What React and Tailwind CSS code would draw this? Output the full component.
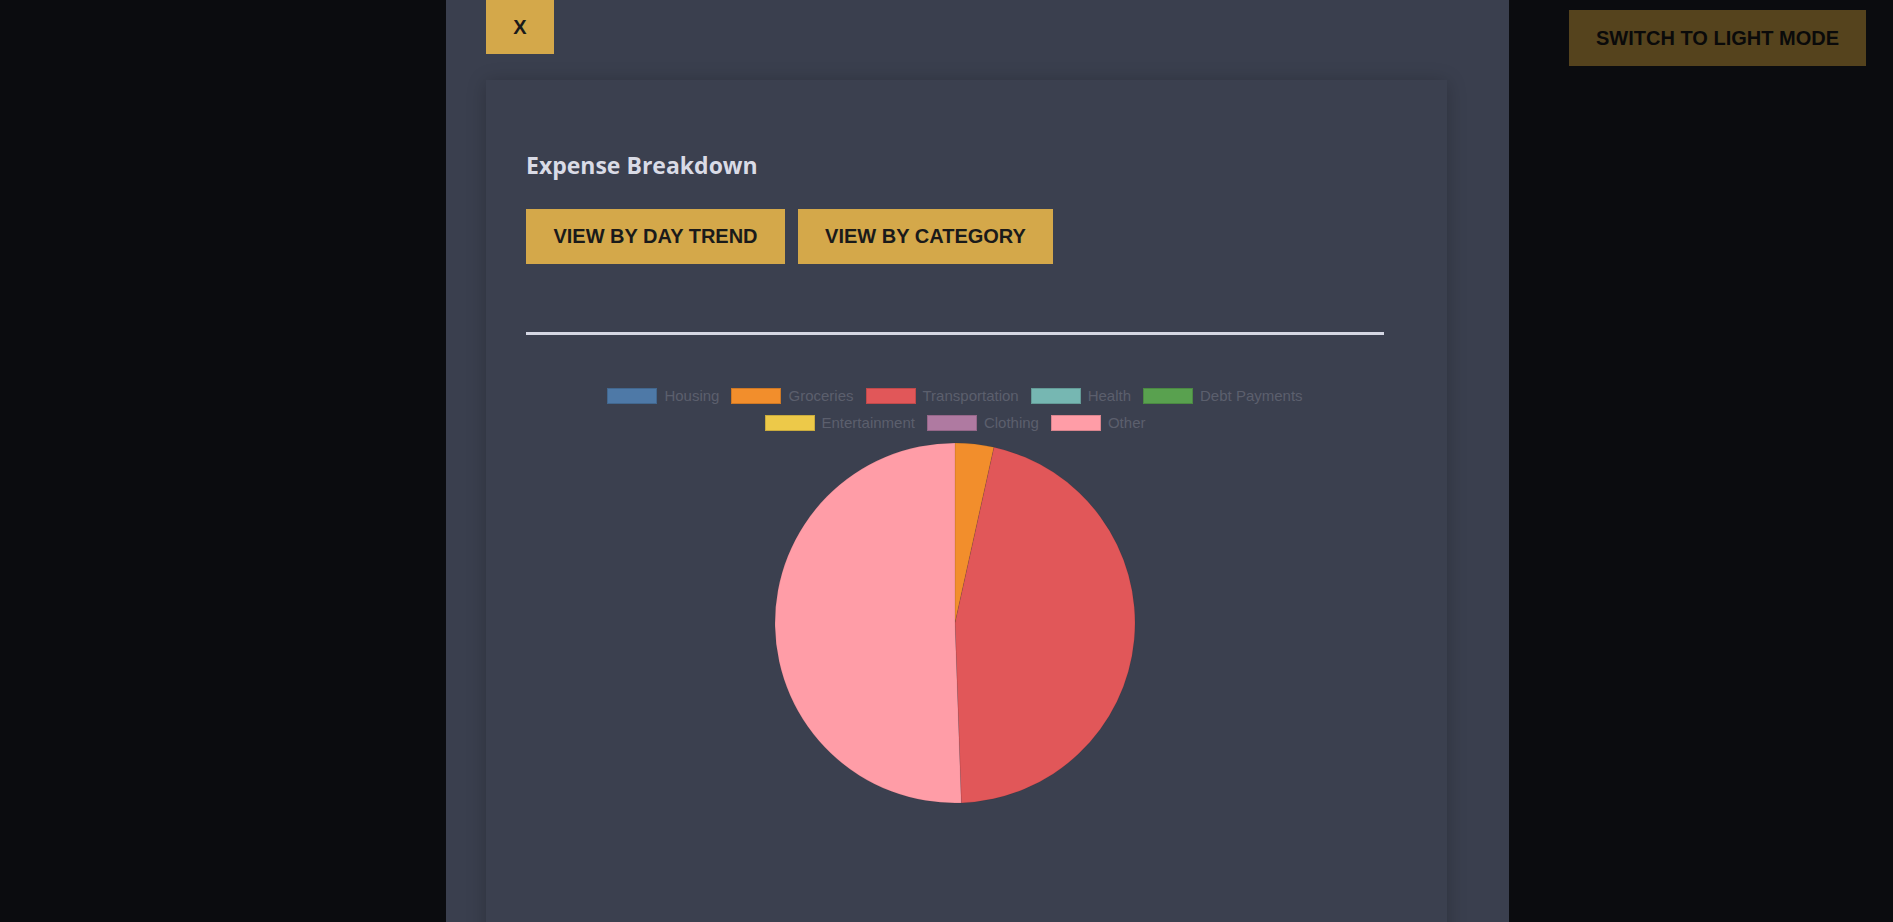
import React from 'react';

const legendRows = [
  [
    { label: 'Housing', color: '#4e79a7' },
    { label: 'Groceries', color: '#f28e2c' },
    { label: 'Transportation', color: '#e15759' },
    { label: 'Health', color: '#76b7b2' },
    { label: 'Debt Payments', color: '#59a14f' },
  ],
  [
    { label: 'Entertainment', color: '#edc949' },
    { label: 'Clothing', color: '#af7aa1' },
    { label: 'Other', color: '#ff9da7' },
  ],
];

// slices go clockwise from 12 o'clock, angles in degrees
const slices = [
  { color: '#f28e2c', from: 0, to: 12.5 },
  { color: '#e15759', from: 12.5, to: 178 },
  { color: '#ff9da7', from: 178, to: 360 },
];

const R = 180;
const C = 181;

const pt = (deg) => {
  const a = (deg * Math.PI) / 180;
  return [C + R * Math.sin(a), C - R * Math.cos(a)];
};

const slicePath = ({ from, to }) => {
  const [x1, y1] = pt(from);
  const [x2, y2] = pt(to === 360 ? 359.999 : to);
  const large = to - from > 180 ? 1 : 0;
  return `M${C},${C} L${x1},${y1} A${R},${R} 0 ${large} 1 ${x2},${y2} Z`;
};

const PieChart = () => (
  <svg width="362" height="362" viewBox="0 0 362 362">
    {slices.map((s) => (
      <path key={s.color} d={slicePath(s)} fill={s.color} stroke="rgba(0,0,0,0.08)" strokeWidth="1" />
    ))}
  </svg>
);

const GoldButton = ({ children, className = '' }) => (
  <button className={`flex items-center justify-center whitespace-nowrap bg-[#d4a84a] text-[#1a1a1a] font-bold uppercase text-[20px] leading-[23px] ${className}`}>
    {children}
  </button>
);

export default function App() {
  return (
    <div className="relative h-[922px] w-full overflow-hidden bg-[#1d1f26] font-['Liberation_Sans',Arial,sans-serif]">
      <div className="flex justify-end pt-[10px] pr-[27px]">
        <GoldButton className="w-[297px] h-[56px]">Switch to Light Mode</GoldButton>
      </div>

      <div className="fixed inset-0 bg-black/60 flex pl-[446px]">
        <div className="w-[1063px] h-full bg-[#3a3f4e] px-[40px] overflow-hidden">
          <GoldButton className="w-[68px] h-[54px]">X</GoldButton>

          <div className="mt-[26px] w-[961px] bg-[#3b404f] shadow-[0_2px_18px_rgba(0,0,0,0.22)] px-[40px] pt-[70px] pb-[200px]">
            <h2 className="font-['Open_Sans',sans-serif] font-bold text-[23px] leading-[30px] text-[#d9dbe6]">
              Expense Breakdown
            </h2>

            <div className="flex gap-[13px] mt-[29px]">
              <GoldButton className="w-[259px] h-[55px]">View by Day Trend</GoldButton>
              <GoldButton className="w-[255px] h-[55px]">View by Category</GoldButton>
            </div>

            <div className="w-[858px] h-[3px] bg-[#d5d7e3] mt-[68px]" />

            <div className="w-[858px] flex flex-col items-center mt-[47px]">
              {legendRows.map((row, i) => (
                <div key={i} className="flex items-center h-[27.5px]">
                  {row.map((item) => (
                    <div key={item.label} className="flex items-center mx-[6px]">
                      <span
                        className="w-[50px] h-[16px] border border-black/15"
                        style={{ backgroundColor: item.color }}
                      />
                      <span className="ml-[7px] text-[15px] leading-[16px] text-[#5b5f6d]">{item.label}</span>
                    </div>
                  ))}
                </div>
              ))}
              <div className="mt-[5px]">
                <PieChart />
              </div>
            </div>
          </div>
        </div>
      </div>
    </div>
  );
}
